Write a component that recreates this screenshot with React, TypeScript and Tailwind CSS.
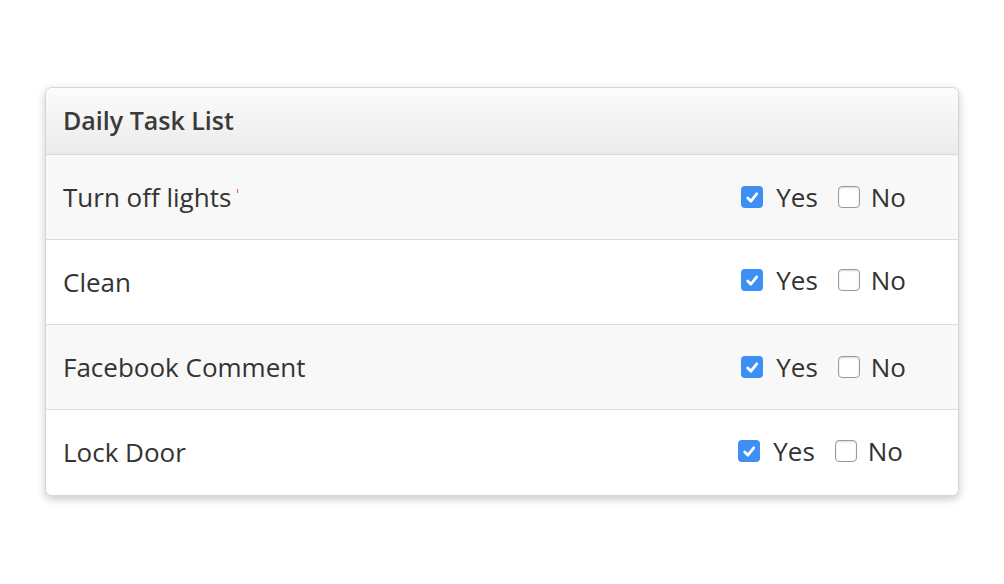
import React, { useState } from "react";

type Task = { name: string; yes: boolean; no: boolean; mark?: boolean; offset: string };

const initialTasks: Task[] = [
    { name: "Turn off lights", yes: true, no: false, mark: true, offset: "pr-[52px]" },
    { name: "Clean", yes: true, no: false, offset: "pr-[52px] -mt-[4px]" },
    { name: "Facebook Comment", yes: true, no: false, offset: "pr-[52px]" },
    { name: "Lock Door", yes: true, no: false, offset: "pr-[55px] -mt-[3px]" },
];

function Box({ checked, onClick }: { checked: boolean; onClick: () => void }) {
    return (
        <button
            onClick={onClick}
            className={`w-[22px] h-[22px] rounded-[4px] flex items-center justify-center ${
                checked ? "bg-[#3d8ff3]" : "bg-white border border-[#9a9a9a] shadow-[inset_0_1px_2px_rgba(0,0,0,0.15)]"
            }`}
        >
            {checked && (
                <svg viewBox="0 0 16 16" className="w-[17px] h-[17px]">
                    <path d="M3.5 8.5 L6.5 11.5 L12 4.5" fill="none" stroke="white" strokeWidth="2.6" strokeLinecap="round" strokeLinejoin="round" />
                </svg>
            )}
        </button>
    );
}

export default function App() {
    const [tasks, setTasks] = useState(initialTasks);

    const toggle = (i: number, key: "yes" | "no") =>
        setTasks(tasks.map((t, j) => (j === i ? { ...t, [key]: !t[key] } : t)));

    return (
        <div className="w-[1004px] h-[584px] bg-white pt-[87px] pl-[45px] font-['Open_Sans',sans-serif] text-[#333]">
            <div className="w-[914px] rounded-[7px] border border-[#d6d6d6] bg-white overflow-hidden shadow-[0_3px_8px_rgba(0,0,0,0.22)]">
                {/* header */}
                <div className="h-[67px] flex items-center px-[17px] bg-gradient-to-b from-[#fcfcfc] to-[#ebebeb] border-b border-[#d9d9d9]">
                    <span className="text-[25px] font-semibold text-[#3a3a3a]">Daily Task List</span>
                </div>
                {tasks.map((t, i) => (
                    <div
                        key={t.name}
                        className={`h-[85px] flex items-center justify-between pl-[17px] ${
                            i % 2 === 0 ? "bg-[#f8f8f8]" : "bg-white"
                        } ${i < tasks.length - 1 ? "border-b border-[#dcdcdc]" : ""}`}
                    >
                        <span className="text-[26px] flex items-center gap-[6px]">
                            {t.name}
                            {t.mark && <span className="w-[1px] h-[4px] bg-[#e05a2a] -mt-[12px]" />}
                        </span>
                        <div className={`flex items-center ${t.offset}`}>
                            <Box checked={t.yes} onClick={() => toggle(i, "yes")} />
                            <span className="text-[26px] ml-[13px] mr-[20px] leading-none">Yes</span>
                            <Box checked={t.no} onClick={() => toggle(i, "no")} />
                            <span className="text-[26px] ml-[11px] leading-none">No</span>
                        </div>
                    </div>
                ))}
            </div>
        </div>
    );
}
